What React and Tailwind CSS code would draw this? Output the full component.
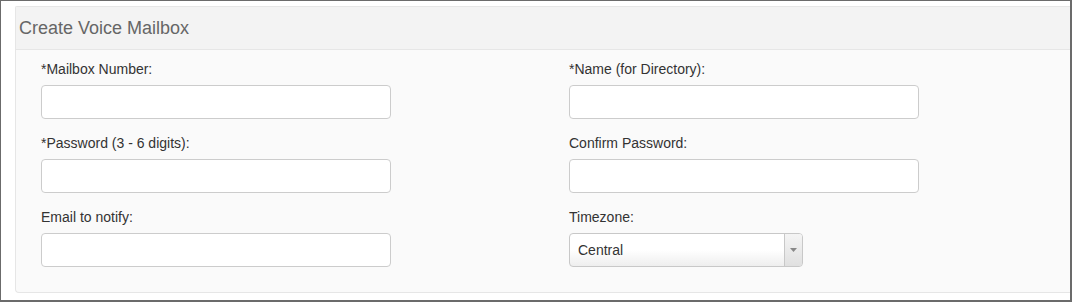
export default function App() {
    const fieldsLeft = ["*Mailbox Number:", "*Password (3 - 6 digits):", "Email to notify:"];
    const fieldsRight = ["*Name (for Directory):", "Confirm Password:"];

    return (
        <div
            className="w-[1072px] h-[302px] bg-white border-t border-l border-r-2 border-b-2 border-[#6b6b6b] pt-[5px] pl-[14px]"
            style={{ fontFamily: '"Liberation Sans", Arial, sans-serif' }}
        >
            <div className="h-[287px] border border-r-0 border-[#e6e6e6] rounded-bl-[4px] rounded-tl-[2px] bg-[#fafafa] overflow-hidden">
                <div className="h-[43px] bg-[#f3f3f3] border-b border-[#e6e6e6] pl-[3px] flex items-center">
                    <h2 className="text-[18px] text-[#666666] leading-none">Create Voice Mailbox</h2>
                </div>
                <div className="pl-[25px] pt-[10px] grid grid-cols-[528px_1fr]">
                    <div className="flex flex-col">
                        {fieldsLeft.map((label) => (
                            <div key={label} className="h-[74px]">
                                <label className="block text-[14px] leading-[18px] text-[#333333]">{label}</label>
                                <input
                                    type="text"
                                    className="mt-[7px] block w-[350px] h-[34px] bg-white border border-[#cccccc] rounded-[4px]"
                                />
                            </div>
                        ))}
                    </div>
                    <div className="flex flex-col">
                        {fieldsRight.map((label) => (
                            <div key={label} className="h-[74px]">
                                <label className="block text-[14px] leading-[18px] text-[#333333]">{label}</label>
                                <input
                                    type="text"
                                    className="mt-[7px] block w-[350px] h-[34px] bg-white border border-[#cccccc] rounded-[4px]"
                                />
                            </div>
                        ))}
                        <div className="h-[74px]">
                            <label className="block text-[14px] leading-[18px] text-[#333333]">Timezone:</label>
                            <div className="mt-[7px] flex w-[234px] h-[34px] border border-[#c8c8c8] rounded-[4px] bg-gradient-to-b from-white via-white to-[#eeeeee] overflow-hidden">
                                <div className="flex-1 flex items-center pl-[8px] text-[14px] text-[#333333]">Central</div>
                                <div className="w-[18px] border-l border-[#c8c8c8] bg-gradient-to-b from-[#f4f4f4] to-[#e0e0e0] flex items-center justify-center">
                                    <svg width="7" height="4" viewBox="0 0 7 4">
                                        <path d="M0 0 L7 0 L3.5 4 Z" fill="#888888" />
                                    </svg>
                                </div>
                            </div>
                        </div>
                    </div>
                </div>
            </div>
        </div>
    );
}
